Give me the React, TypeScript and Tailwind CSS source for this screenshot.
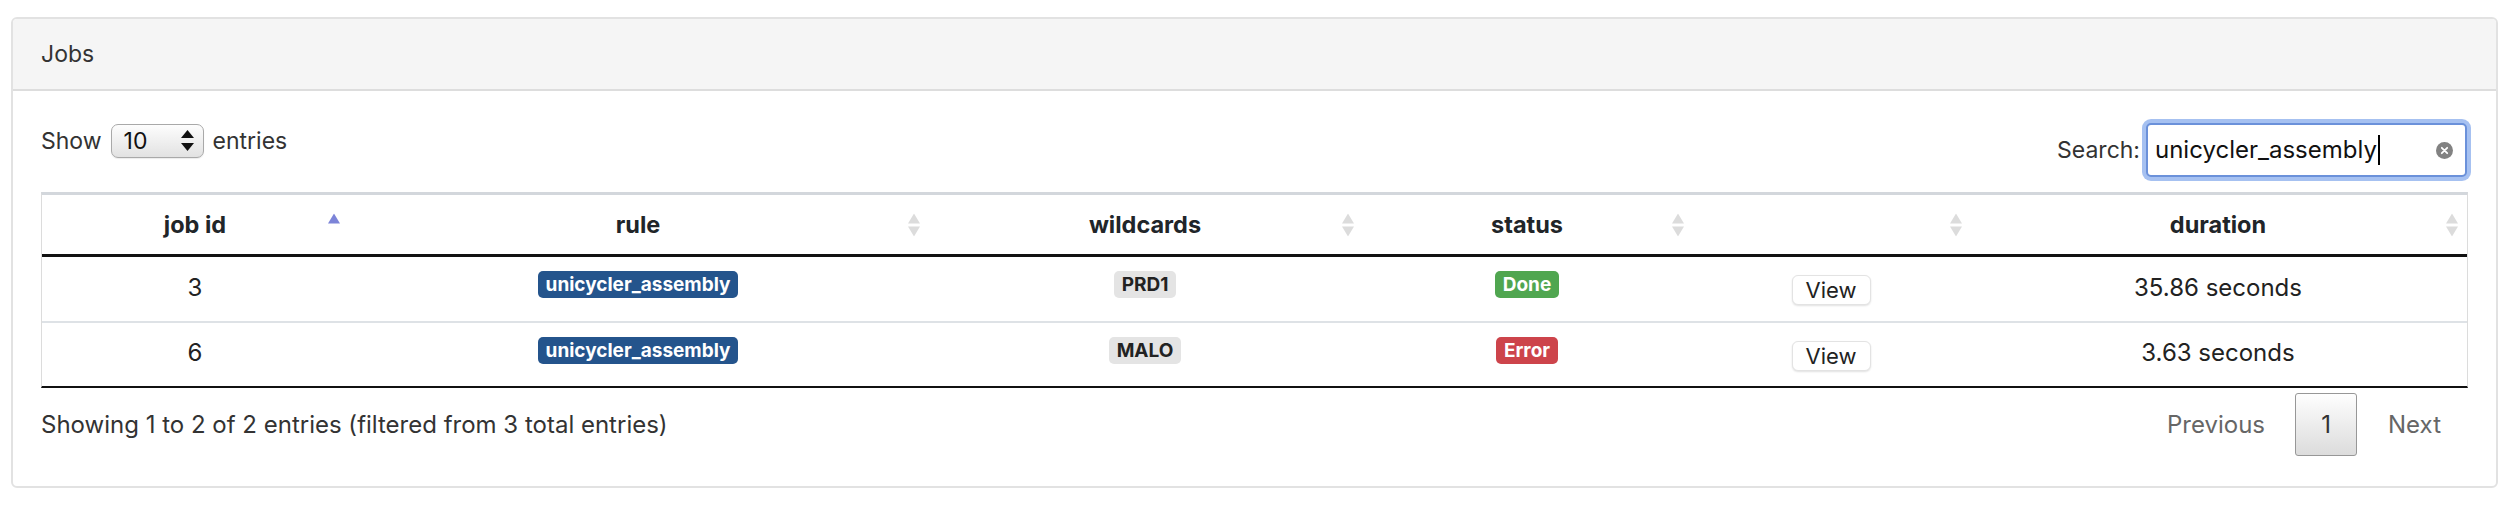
import React from "react"

const cols = ["w-[306px]", "w-[580px]", "w-[434px]", "w-[330px]", "w-[278px]", "w-[496px]"]

function SortIcon({ active }: { active?: boolean }) {
  return (
    <svg
      width="12"
      height="23"
      viewBox="0 0 12 23"
      className="absolute right-[8px] top-1/2 -translate-y-1/2"
    >
      <path d="M6 0 L12 10 L0 10 Z" fill={active ? "#7c84d8" : "#dcdcdc"} />
      {!active && <path d="M0 13 L12 13 L6 23 Z" fill="#dcdcdc" />}
    </svg>
  )
}

function Badge({ text, tone }: { text: string; tone: "blue" | "gray" | "green" | "red" }) {
  const tones = {
    blue: "bg-[#24548c] text-white",
    gray: "bg-[#e4e4e4] text-[#222]",
    green: "bg-[#50a650] text-white",
    red: "bg-[#cd444b] text-white",
  }
  return (
    <span
      className={`inline-flex items-center h-[27px] px-[8px] mb-[9px] rounded-[5px] text-[19px] font-bold leading-none ${tones[tone]}`}
    >
      {text}
    </span>
  )
}

const jobs = [
  { id: 3, rule: "unicycler_assembly", wildcards: "PRD1", status: "Done", duration: "35.86 seconds" },
  { id: 6, rule: "unicycler_assembly", wildcards: "MALO", status: "Error", duration: "3.63 seconds" },
]

export default function App() {
  const headers = ["job id", "rule", "wildcards", "status", "", "duration"]
  return (
    <div className="bg-white w-full h-[510px] pt-[17px] pl-[11px] pr-[18px] font-['Inter',sans-serif] text-[#333]">
      <div className="border-2 border-[#e2e2e2] rounded-[6px] overflow-hidden h-[471px]">
        {/* card header */}
        <div className="h-[72px] bg-[#f5f5f5] border-b-2 border-[#dddddd] flex items-center px-[28px] text-[23px]">
          Jobs
        </div>

        <div className="px-[28px] pt-[32px]">
          {/* length + filter */}
          <div className="flex justify-between items-start h-[54px] mb-[15px]">
            <div className="flex items-center mt-[1px] h-[34px] text-[23px] gap-[9px]">
              <span>Show</span>
              <div className="flex items-center justify-between w-[93px] h-[34px] pl-[12px] pr-[9px] rounded-[7px] border border-[#a9a9a9] bg-gradient-to-b from-[#fdfdfd] to-[#e2e2e2] shadow-[0_1px_1px_rgba(0,0,0,0.08)] text-[#111]">
                <span>10</span>
                <svg width="13" height="22" viewBox="0 0 13 22">
                  <path d="M6.5 0 L13 8 L0 8 Z" fill="#111" />
                  <path d="M0 13 L13 13 L6.5 21 Z" fill="#111" />
                </svg>
              </div>
              <span>entries</span>
            </div>
            <div className="flex items-center h-[54px] gap-[6px] text-[23px] mr-[1px]">
              <span>Search:</span>
              <div className="flex items-center justify-between w-[321px] h-[54px] pl-[7px] pr-[12px] rounded-[5px] border-2 border-[#6b91da] ring-4 ring-[#a6c1f1] bg-white">
                <span className="flex items-center text-[24px] text-[#111]">
                  unicycler_assembly
                  <span className="inline-block w-[2px] h-[30px] bg-black ml-[1px]"></span>
                </span>
                <svg width="17" height="17" viewBox="0 0 17 17">
                  <circle cx="8.5" cy="8.5" r="8.5" fill="#828282" />
                  <path d="M5.8 5.8 L11.2 11.2 M11.2 5.8 L5.8 11.2" stroke="white" strokeWidth="1.8" strokeLinecap="round" />
                </svg>
              </div>
            </div>
          </div>

          {/* table */}
          <div className="border-t-[3px] border-[#d3d7dc] border-x border-x-[#dcdcdc] border-b-2 border-b-[#111]">
            <div className="flex h-[62px] border-b-[3px] border-[#111]">
              {headers.map((h, i) => (
                <div
                  key={i}
                  className={`relative flex items-center justify-center font-bold text-[23.5px] text-[#212529] ${cols[i]}`}
                >
                  {h}
                  <SortIcon active={i === 0} />
                </div>
              ))}
            </div>
            {jobs.map((job, r) => (
              <div
                key={job.id}
                className={`flex text-[24px] text-[#222] ${r === 0 ? "h-[64px]" : "h-[65px] border-t-2 border-[#dee2e6]"}`}
              >
                <div className={`flex items-center justify-center mb-[3px] ${cols[0]}`}>{job.id}</div>
                <div className={`flex items-center justify-center ${cols[1]}`}>
                  <Badge text={job.rule} tone="blue" />
                </div>
                <div className={`flex items-center justify-center ${cols[2]}`}>
                  <Badge text={job.wildcards} tone="gray" />
                </div>
                <div className={`flex items-center justify-center ${cols[3]}`}>
                  <Badge text={job.status} tone={job.status === "Done" ? "green" : "red"} />
                </div>
                <div className={`flex items-center justify-center ${cols[4]}`}>
                  <button className="w-[79px] h-[30px] mt-[2px] rounded-[6px] border border-[#e3e3e3] bg-white shadow-[0_1px_2px_rgba(0,0,0,0.12)] text-[22px] text-[#222] leading-none">
                    View
                  </button>
                </div>
                <div className={`flex items-center justify-center mb-[3px] ${cols[5]}`}>{job.duration}</div>
              </div>
            ))}
          </div>

          {/* info + pagination */}
          <div className="flex justify-between items-center mt-[5px] h-[63px] text-[24px]">
            <span>Showing 1 to 2 of 2 entries (filtered from 3 total entries)</span>
            <div className="flex items-center h-[63px] text-[#666] mr-[27px]">
              <span className="mr-[30px]">Previous</span>
              <span className="flex items-center justify-center w-[62px] h-[63px] rounded-[3px] border border-[#979797] bg-gradient-to-b from-[#fefefe] to-[#dcdcdc] text-[#333]">
                1
              </span>
              <span className="ml-[31px]">Next</span>
            </div>
          </div>
        </div>
      </div>
    </div>
  )
}
